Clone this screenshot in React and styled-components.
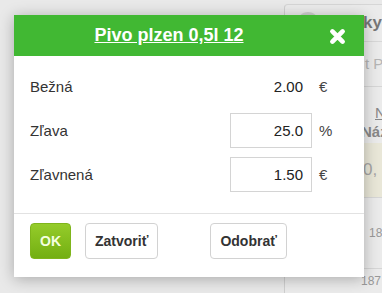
import React from 'react';
import styled, { createGlobalStyle } from 'styled-components';

const GlobalStyle = createGlobalStyle`
    html, body {
        margin: 0;
        padding: 0;
        background: #e4e4e4;
        font-family: "Liberation Sans", Arial, sans-serif;
    }
`;

const Page = styled.div`
    position: relative;
    width: 382px;
    height: 293px;
    overflow: hidden;
    display: flex;
    background: #e9e9e9;
`;

const LeftArea = styled.div`
    width: 284px;
    flex-shrink: 0;
`;

const SidePanel = styled.div`
    flex: 1;
    min-width: 0;
    margin-top: 4px;
    border-left: 1px solid #cfcfcf;
    border-top: 1px solid #d6d6d6;
    border-top-left-radius: 4px;
    background: #ebebeb;
    display: flex;
    flex-direction: column;
    color: #8a8a8a;
    font-size: 15px;
    white-space: nowrap;
`;

const PanelHead = styled.div`
    height: 36px;
    display: flex;
    align-items: center;
    gap: 44px;
    padding-left: 12px;
    border-bottom: 1px solid #d8d8d8;
    color: #777;
    font-weight: bold;
    font-size: 17px;
`;

const Avatar = styled.div`
    width: 22px;
    height: 22px;
    border-radius: 50%;
    background: #cfcfcf;
`;

const PanelLine = styled.div`
    height: ${p => p.h}px;
    display: flex;
    align-items: ${p => p.align || 'center'};
    padding-left: ${p => p.pl || 10}px;
    border-bottom: ${p => (p.border ? '1px solid #d6d6d6' : 'none')};
    background: ${p => p.bg || 'transparent'};
    color: ${p => p.color || '#a0a0a0'};
    font-size: ${p => p.fs || 15}px;
    font-weight: ${p => p.fw || 'normal'};
    text-decoration: ${p => (p.underline ? 'underline' : 'none')};
    overflow: hidden;
`;

const Modal = styled.div`
    position: absolute;
    left: 14px;
    top: 15px;
    width: 350px;
    height: 262px;
    background: #fff;
    box-shadow: 0 2px 14px rgba(0, 0, 0, 0.28);
    display: flex;
    flex-direction: column;
`;

const Header = styled.div`
    height: 41px;
    background: #41b833;
    display: flex;
    align-items: center;
    justify-content: center;
    position: relative;
    flex-shrink: 0;
`;

const Title = styled.span`
    color: #fff;
    font-weight: bold;
    font-size: 18px;
    text-decoration: underline;
    margin-right: 40px;
`;

const Close = styled.svg`
    position: absolute;
    right: 18px;
    top: 13px;
    width: 17px;
    height: 17px;
`;

const Body = styled.div`
    flex: 1;
    padding: 8px 16px 0 16px;
    display: flex;
    flex-direction: column;
    border-bottom: 1px solid #e2e2e2;
`;

const Row = styled.div`
    height: 44px;
    display: flex;
    align-items: center;
    font-size: 15px;
    color: #333;
`;

const Label = styled.div`
    flex: 1;
`;

const Value = styled.div`
    width: 82px;
    height: 35px;
    box-sizing: border-box;
    display: flex;
    align-items: center;
    justify-content: flex-end;
    padding-right: 8px;
    border: ${p => (p.input ? '1px solid #d4d4d4' : '1px solid transparent')};
    background: #fff;
    color: #222;
    font-size: 15px;
`;

const Unit = styled.div`
    width: 36px;
    padding-left: 7px;
    box-sizing: border-box;
    color: #444;
`;

const Footer = styled.div`
    height: 63px;
    display: flex;
    align-items: flex-start;
    padding: 9px 16px 0 16px;
    box-sizing: border-box;
    gap: 14px;
    flex-shrink: 0;
`;

const Button = styled.button`
    height: 36px;
    padding: 0 ${p => p.px || 9}px;
    border-radius: 4px;
    font-family: "Liberation Sans", Arial, sans-serif;
    font-weight: bold;
    font-size: 14px;
    cursor: pointer;
    margin-left: ${p => p.ml || 0}px;
    color: ${p => (p.primary ? '#f4ffe0' : '#333')};
    border: ${p => (p.primary ? '1px solid #7fb51c' : '1px solid #d2d2d2')};
    background: ${p => (p.primary ? 'linear-gradient(#95cc2a, #73af12)' : '#fff')};
`;

export default function App() {
    return (
        <>
            <GlobalStyle />
            <Page>
                <LeftArea />
                <SidePanel>
                    <PanelHead>
                        <Avatar />
                        <span>ky</span>
                    </PanelHead>
                    <PanelLine h={44} border pl={80} color="#b5b5b5">t P</PanelLine>
                    <PanelLine h={34} align="flex-end" pl={90} color="#888" underline>N</PanelLine>
                    <PanelLine h={22} pl={76} color="#888" fw="bold">Náz</PanelLine>
                    <PanelLine h={55} border bg="#e9e7d8" pl={78} fs={17} color="#a5a5a5">0,</PanelLine>
                    <PanelLine h={70} border pl={84} fs={12} color="#999">18</PanelLine>
                    <PanelLine h={24} pl={76} fs={12} color="#999">187</PanelLine>
                </SidePanel>

                <Modal>
                    <Header>
                        <Title>Pivo plzen 0,5l 12</Title>
                        <Close viewBox="0 0 20 20">
                            <path d="M4 4 L16 16 M16 4 L4 16" stroke="#fff" strokeWidth="5.5" strokeLinecap="round" />
                        </Close>
                    </Header>
                    <Body>
                        <Row>
                            <Label>Bežná</Label>
                            <Value>2.00</Value>
                            <Unit>€</Unit>
                        </Row>
                        <Row>
                            <Label>Zľava</Label>
                            <Value input>25.0</Value>
                            <Unit>%</Unit>
                        </Row>
                        <Row>
                            <Label>Zľavnená</Label>
                            <Value input>1.50</Value>
                            <Unit>€</Unit>
                        </Row>
                    </Body>
                    <Footer>
                        <Button primary>OK</Button>
                        <Button>Zatvoriť</Button>
                        <Button ml={38}>Odobrať</Button>
                    </Footer>
                </Modal>
            </Page>
        </>
    );
}
